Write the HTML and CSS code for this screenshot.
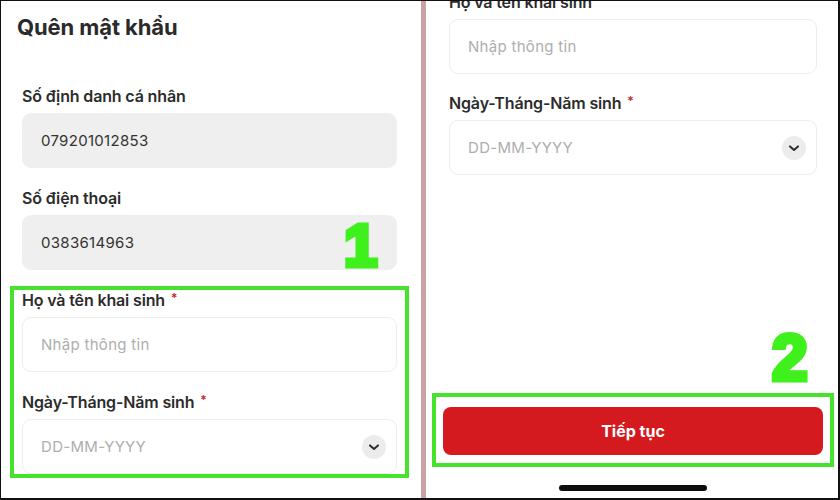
FILE: index.html
```html
<!DOCTYPE html>
<html lang="vi">
<head>
<meta charset="utf-8">
<title>Quên mật khẩu</title>
<link rel="stylesheet" href="styles.css">
</head>
<body>
<div class="frame">
  <section class="panel panel-left">
    <h1 class="title">Quên mật khẩu</h1>
    <div class="form form-left">
      <div class="field">
        <div class="label">Số định danh cá nhân</div>
        <div class="input input-filled">079201012853</div>
      </div>
      <div class="field">
        <div class="label">Số điện thoại</div>
        <div class="input input-filled">0383614963</div>
      </div>
      <div class="highlight highlight-left">
        <div class="field">
          <div class="label">Họ và tên khai sinh <span class="req">*</span></div>
          <div class="input input-empty">Nhập thông tin</div>
        </div>
        <div class="field">
          <div class="label">Ngày-Tháng-Năm sinh <span class="req">*</span></div>
          <div class="input input-empty input-select">
            <span>DD-MM-YYYY</span>
            <span class="chev"><svg width="24" height="24" viewBox="0 0 24 24"><path d="M8 10.4 L12 14 L16 10.4" fill="none" stroke="#2e2e2e" stroke-width="2" stroke-linecap="round" stroke-linejoin="round"/></svg></span>
          </div>
        </div>
      </div>
    </div>
    <span class="step step-1">1</span>
  </section>
  <div class="divider"></div>
  <section class="panel panel-right">
    <div class="form form-right">
      <div class="field">
        <div class="label">Họ và tên khai sinh <span class="req">*</span></div>
        <div class="input input-empty">Nhập thông tin</div>
      </div>
      <div class="field">
        <div class="label">Ngày-Tháng-Năm sinh <span class="req">*</span></div>
        <div class="input input-empty input-select">
          <span>DD-MM-YYYY</span>
          <span class="chev"><svg width="24" height="24" viewBox="0 0 24 24"><path d="M8 10.4 L12 14 L16 10.4" fill="none" stroke="#2e2e2e" stroke-width="2" stroke-linecap="round" stroke-linejoin="round"/></svg></span>
        </div>
      </div>
    </div>
    <div class="spacer"></div>
    <div class="highlight highlight-right">
      <button class="btn" type="button">Tiếp tục</button>
    </div>
    <div class="home-bar"></div>
    <span class="step step-2">2</span>
  </section>
</div>
</body>
</html>
```

FILE: styles.css
```css
* {
  box-sizing: border-box;
  margin: 0;
  padding: 0;
}

html,
body {
  width: 840px;
  height: 500px;
  overflow: hidden;
  background: #ffffff;
}

body {
  font-family: Inter, "Noto Sans", "Liberation Sans", sans-serif;
  color: #2b2b2b;
}

.frame {
  width: 840px;
  height: 500px;
  display: flex;
  border-style: solid;
  border-color: #111111;
  border-width: 1px 2px 2px 1px;
  background: #ffffff;
}

.panel {
  position: relative;
  overflow: hidden;
  background: #ffffff;
}

.panel-left {
  width: 420px;
  flex: none;
  padding: 12px 24px 0 16px;
}

.divider {
  width: 5px;
  flex: none;
  background: #c9a2a4;
}

.panel-right {
  flex: 1;
  display: flex;
  flex-direction: column;
  padding: 0 21px 7px 23px;
}

.title {
  font-size: 22px;
  line-height: 28px;
  font-weight: 700;
  color: #2a2a2a;
  letter-spacing: -0.1px;
}

.form-left {
  margin-top: 45px;
  padding-left: 5px;
}

.form-right {
  margin-top: -9px;
}

.field + .field {
  margin-top: 20px;
}

.form-right .field + .field {
  margin-top: 19px;
}

.label {
  font-size: 16px;
  line-height: 20px;
  height: 20px;
  font-weight: 600;
  color: #2c2c2c;
  margin-bottom: 7px;
  letter-spacing: -0.15px;
}

.req {
  color: #c4262b;
  font-size: 12px;
  line-height: 0;
  vertical-align: 4px;
  margin-left: 2px;
}

.input {
  height: 55px;
  border-radius: 9px;
  padding: 0 12px 0 19px;
  display: flex;
  align-items: center;
  font-size: 15px;
  letter-spacing: 0.3px;
}

.input-filled {
  background: #efefef;
  color: #333333;
}

.input-empty {
  background: #ffffff;
  border: 1px solid #ededed;
  color: #aeaeae;
  padding-left: 18px;
}

.input-select {
  justify-content: space-between;
  padding-right: 10px;
}

.chev {
  width: 24px;
  height: 24px;
  border-radius: 50%;
  background: #ececec;
  display: flex;
  align-items: center;
  justify-content: center;
}

.chev svg {
  display: block;
}

.highlight {
  border: 4px solid #46e22c;
}

.highlight-left {
  margin: 16px -12px 0 -12px;
  padding: 0 8px;
}

.spacer {
  flex: 1;
}

.highlight-right {
  margin: 0 -17px;
  padding: 10px 7px 8px 7px;
}

.btn {
  display: block;
  width: 100%;
  height: 48px;
  border: none;
  border-radius: 8px;
  background: #d4191f;
  color: #ffffff;
  font-family: Inter, "Noto Sans", sans-serif;
  font-size: 16px;
  font-weight: 700;
}

.home-bar {
  flex: none;
  align-self: center;
  width: 148px;
  height: 6px;
  border-radius: 3px;
  background: #0d0d0d;
  margin-top: 18px;
}

.step {
  position: absolute;
  font-family: "Liberation Sans", Arial, sans-serif;
  font-weight: 700;
  font-size: 60px;
  line-height: 1;
  color: #3ff01c;
  -webkit-text-stroke: 5px #3ff01c;
}

.step-1 {
  left: 343px;
  top: 215px;
}

.step-2 {
  left: 346px;
  top: 325px;
  font-size: 64px;
}
```
